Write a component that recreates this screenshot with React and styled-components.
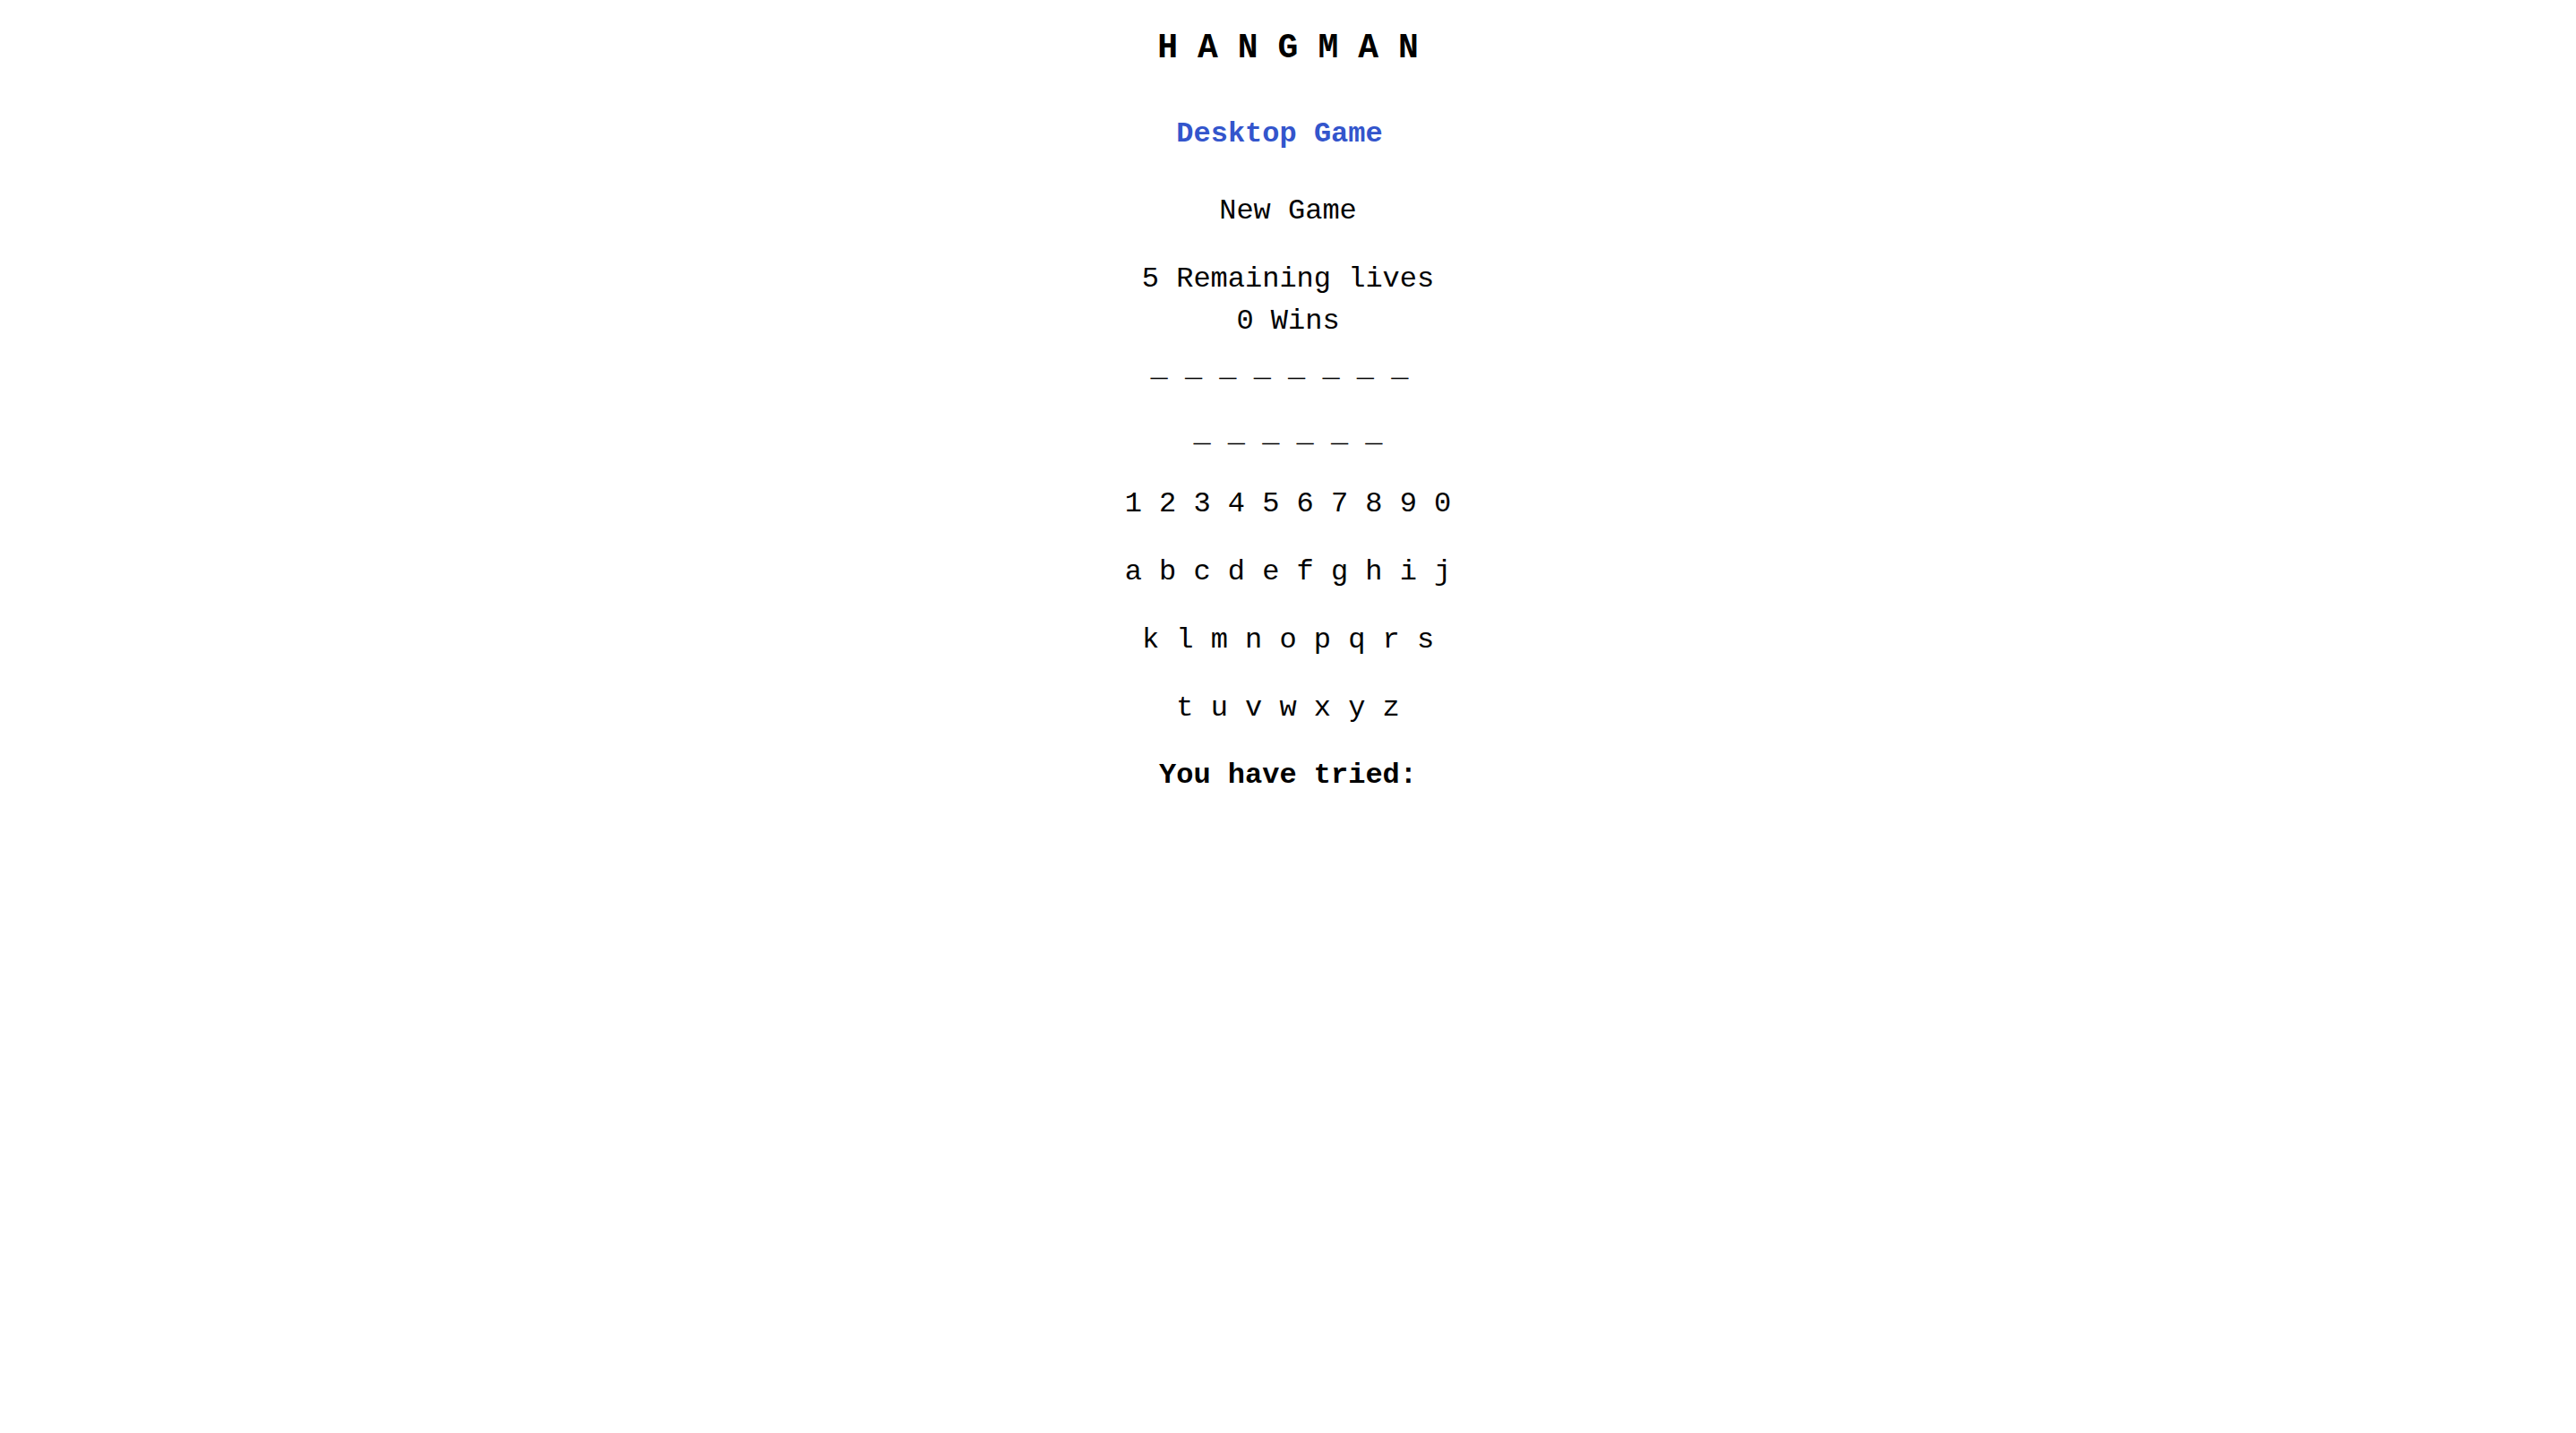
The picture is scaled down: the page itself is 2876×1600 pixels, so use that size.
import React from "react";
import styled, { createGlobalStyle } from "styled-components";

const Global = createGlobalStyle`
  html, body { margin: 0; padding: 0; background: #fff; }
  body { font-family: "Liberation Mono", "Courier New", monospace; color: #000; }
`;

const Page = styled.main`
  display: flex;
  flex-direction: column;
  align-items: center;
  font-size: 32px;
  line-height: 36px;
`;

const Title = styled.h1`
  margin: 32px 0 0;
  font-size: 38px;
  line-height: 44px;
  font-weight: bold;
  letter-spacing: 22px;
  margin-right: -22px;
`;

const SubLink = styled.a`
  margin-top: 56px;
  padding-right: 19px;
  font-weight: bold;
  color: #3355cc;
  text-decoration: none;
  display: block;
`;

const Plain = styled.div`
  margin-top: ${(p) => p.$mt || 0}px;
`;

const Stats = styled.div`
  margin-top: 34px;
  line-height: 47px;
  text-align: center;
`;

const Row = styled.div`
  display: flex;
  gap: 19.2px;
  margin-top: ${(p) => p.$mt || 0}px;
  padding-right: ${(p) => (p.$trail ? 19.2 : 0)}px;
`;

const Key = styled.span`
  width: 19.2px;
  text-align: center;
`;

const Tried = styled.div`
  margin-top: ${(p) => p.$mt || 0}px;
  font-weight: bold;
`;

const words = [8, 6];
const rows = ["1234567890", "abcdefghij", "klmnopqrs", "tuvwxyz"];

export default function App() {
  return (
    <>
      <Global />
      <Page>
        <Title>HANGMAN</Title>
        <SubLink href="#">Desktop Game</SubLink>
        <Plain $mt={50}>New Game</Plain>
        <Stats>
          <div>5 Remaining lives</div>
          <div>0 Wins</div>
        </Stats>
        <Row $mt={12} $trail>
          {Array.from({ length: words[0] }).map((_, i) => (
            <Key key={i}>_</Key>
          ))}
        </Row>
        <Row $mt={37}>
          {Array.from({ length: words[1] }).map((_, i) => (
            <Key key={i}>_</Key>
          ))}
        </Row>
        <Row $mt={42}>
          {rows[0].split("").map((c) => (
            <Key key={c}>{c}</Key>
          ))}
        </Row>
        {rows.slice(1).map((r) => (
          <Row key={r} $mt={40}>
            {r.split("").map((c) => (
              <Key key={c}>{c}</Key>
            ))}
          </Row>
        ))}
        <Tried $mt={39}>You have tried:</Tried>
      </Page>
    </>
  );
}
